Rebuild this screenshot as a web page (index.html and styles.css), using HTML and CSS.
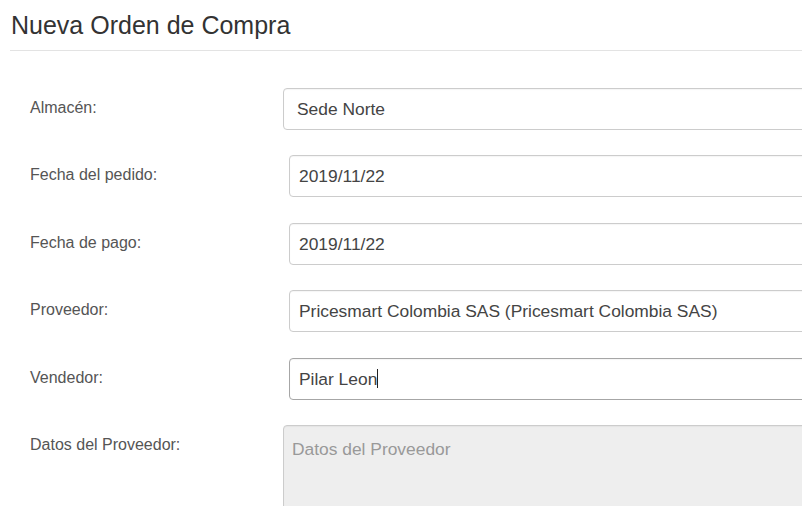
FILE: index.html
```html
<!DOCTYPE html>
<html lang="es">
<head>
<meta charset="utf-8">
<title>Nueva Orden de Compra</title>
<link rel="stylesheet" href="styles.css">
</head>
<body>
<div class="page">
  <div class="page-header">
    <h1 class="title">Nueva Orden de Compra</h1>
  </div>
  <form class="form">
    <div class="row">
      <label class="label">Almacén:</label>
      <div class="control control-select">Sede Norte</div>
    </div>
    <div class="row">
      <label class="label">Fecha del pedido:</label>
      <div class="control control-shift">2019/11/22</div>
    </div>
    <div class="row">
      <label class="label">Fecha de pago:</label>
      <div class="control control-shift">2019/11/22</div>
    </div>
    <div class="row">
      <label class="label">Proveedor:</label>
      <div class="control control-shift">Pricesmart Colombia SAS (Pricesmart Colombia SAS)</div>
    </div>
    <div class="row">
      <label class="label">Vendedor:</label>
      <div class="control control-shift control-focus">Pilar Leon<span class="caret"></span></div>
    </div>
    <div class="row row-area">
      <label class="label">Datos del Proveedor:</label>
      <div class="control control-area"><span class="placeholder">Datos del Proveedor</span></div>
    </div>
  </form>
</div>
</body>
</html>
```
FILE: styles.css
```css
html, body {
  margin: 0;
  padding: 0;
  background: #ffffff;
}
body {
  font-family: "Liberation Sans", Arial, sans-serif;
}
.page {
  width: 802px;
  height: 506px;
  overflow: hidden;
}
.page-header {
  margin-left: 10px;
  padding: 11px 0 10px 1px;
  border-bottom: 1px solid #e3e3e3;
}
.title {
  margin: 0;
  font-size: 25px;
  font-weight: normal;
  line-height: 29px;
  color: #333333;
}
.form {
  margin: 0;
  padding-top: 37px;
}
.row {
  display: flex;
  align-items: flex-start;
  margin-bottom: 25.5px;
}
.row-area {
  margin-top: 1px;
}
.label {
  flex: 0 0 283px;
  box-sizing: border-box;
  padding-left: 30px;
  padding-top: 10px;
  font-size: 16px;
  line-height: 20px;
  color: #555555;
}
.control {
  flex: 0 0 auto;
  width: 620px;
  height: 42px;
  box-sizing: border-box;
  border: 1px solid #cccccc;
  border-radius: 4px;
  padding: 0 9px;
  display: flex;
  align-items: center;
  font-size: 17.4px;
  line-height: 20px;
  color: #444444;
  white-space: nowrap;
  box-shadow: inset 0 1px 1px rgba(0, 0, 0, 0.04);
}
.control-select {
  padding-left: 13px;
  height: 41.5px;
}
.control-shift {
  margin-left: 6px;
}
.control-focus {
  border-color: #a6a6a6;
}
.caret {
  display: inline-block;
  width: 1px;
  height: 19px;
  background: #222222;
}
.control-area {
  height: 120px;
  align-items: flex-start;
  padding-top: 13px;
  padding-left: 8px;
  background: #eeeeee;
}
.placeholder {
  color: #999999;
}
```
